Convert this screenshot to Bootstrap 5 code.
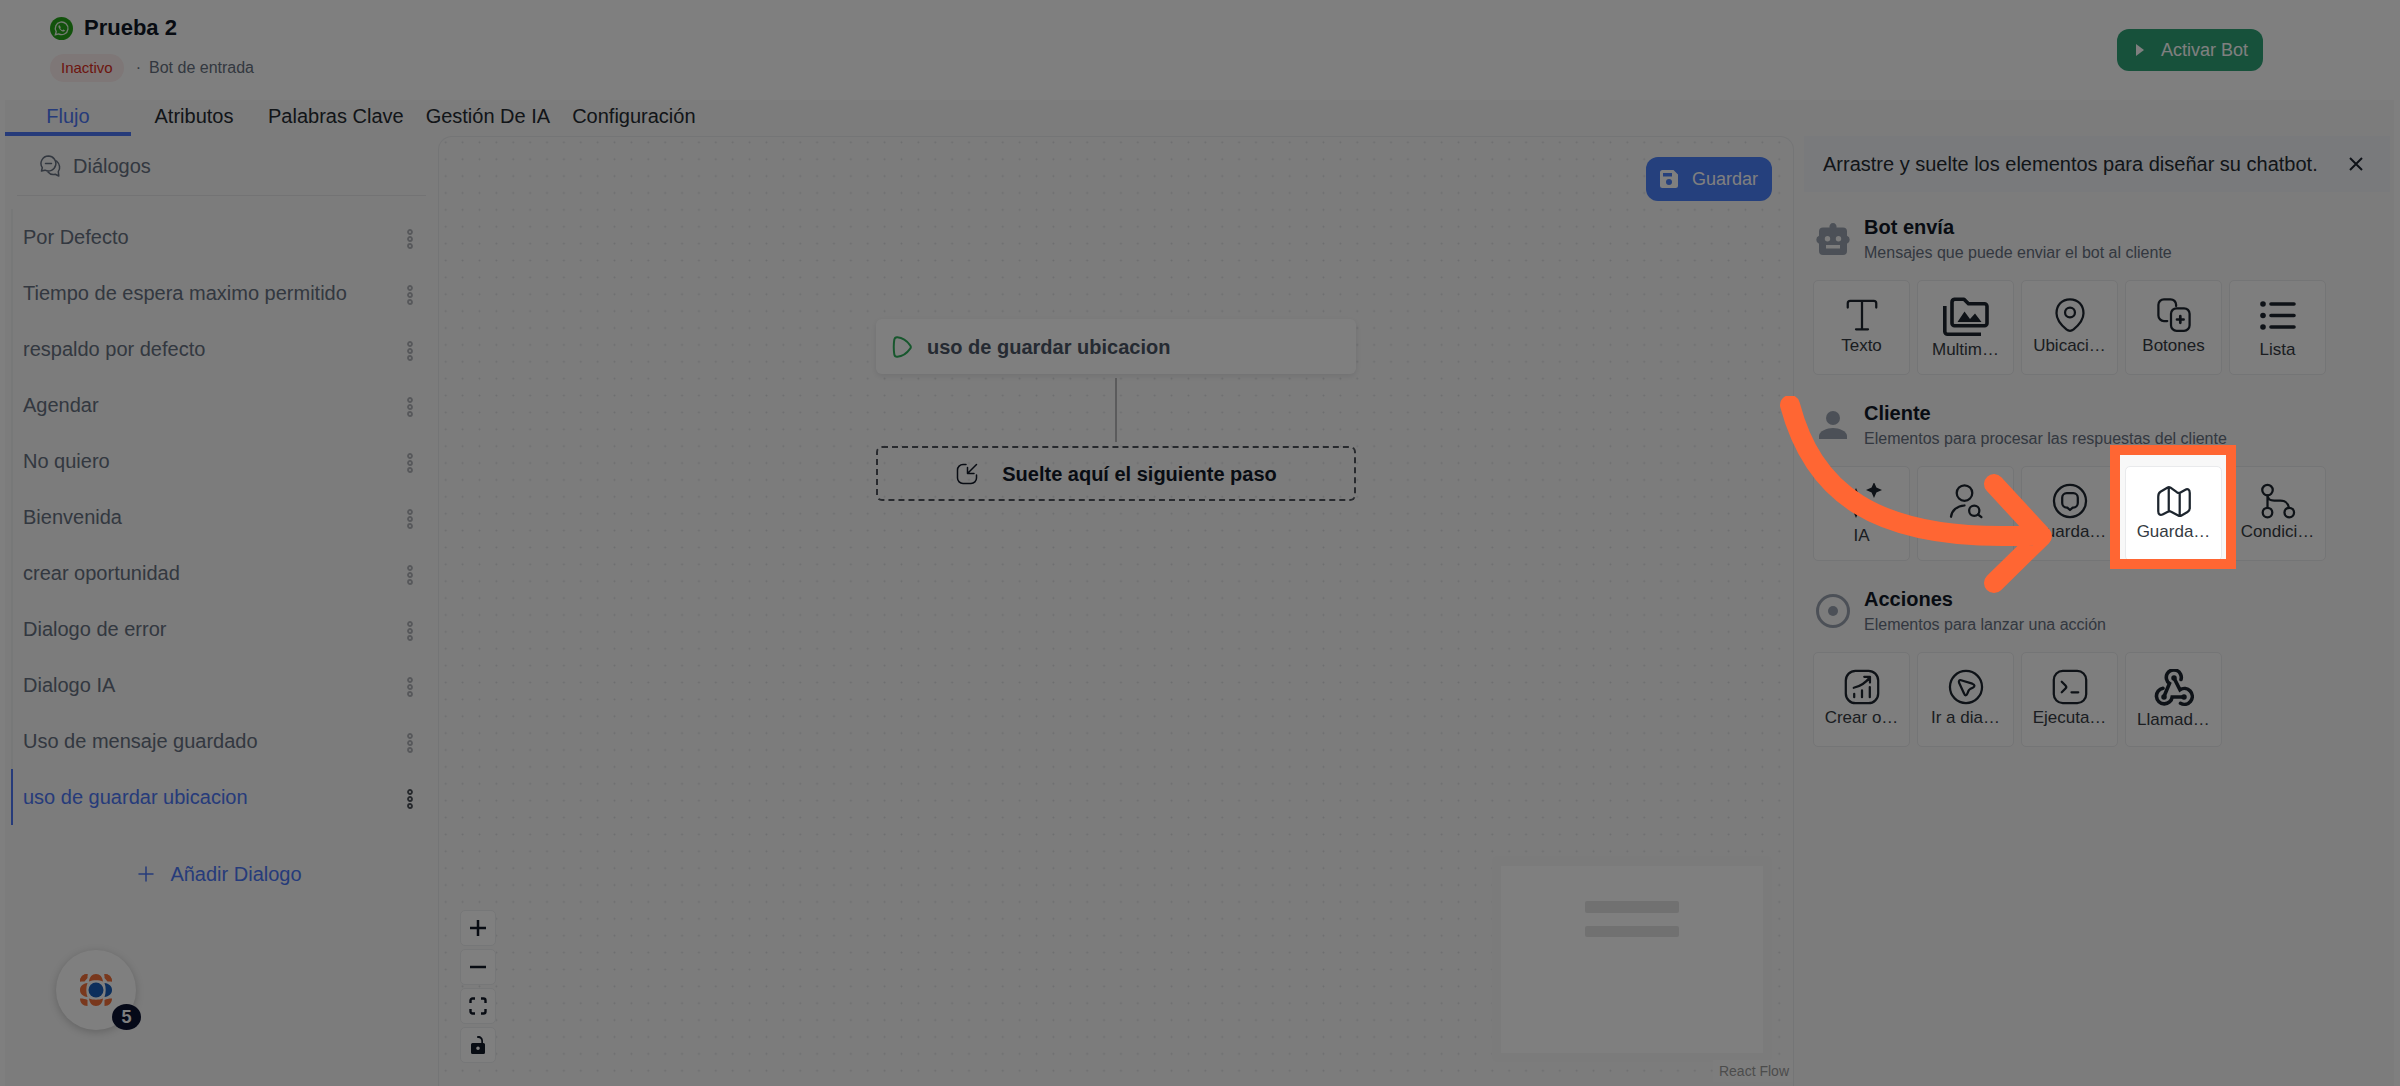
<!DOCTYPE html>
<html lang="es">
<head>
<meta charset="utf-8">
<meta name="viewport" content="width=device-width, initial-scale=1">
<title>Prueba 2 - Bot de entrada</title>
<link href="https://cdn.jsdelivr.net/npm/bootstrap@5.3.0/dist/css/bootstrap.min.css" rel="stylesheet">
<style>
  :root { --ink: #242a31; --muted: #667080; --brand: #4c76f5; --line: #e9eaec; --accent: #ff6633; }
  body { font-family: "Liberation Sans", Arial, sans-serif; font-size: 20px; line-height: 28px; color: var(--ink); background: #fff; overflow: hidden; }
  svg { display: block; flex: none; }
  .stroke-icon { fill: none; stroke: currentColor; stroke-width: 1.5; stroke-linecap: round; stroke-linejoin: round; }
  .page { position: relative; overflow: hidden; }
  .topbar { height: 100px; padding: 13px 137px 0 50px; }
  .title-row { gap: 11px; }
  .meta-row { margin-top: 11px; }
  .bot-name { font-size: 22px; line-height: 30px; color: #111827; }
  .pill-state { font-size: 15px; line-height: 28px; padding: 0 11px; border-radius: 14px; background: #fdeeee; color: #d92d20; }
  .meta-text { font-size: 16px; line-height: 28px; color: var(--muted); }
  .btn-app { --bs-btn-color: #fff; --bs-btn-hover-color: #fff; font-size: 18px; line-height: 26px; height: 44px; border-radius: 12px; border: 0; padding: 0 14px; display: flex; align-items: center; gap: 14px; }
  .btn-go { background: #2ea377; height: 42px; padding: 0 15px 0 14px; gap: 14px; --bs-btn-hover-bg: #27906a; }
  .btn-keep { background: #4a80fa; --bs-btn-hover-bg: #3a70ea; top: 20px; right: 21px; }
  .workspace { margin: 0 6px 0 5px; background: #f8f8f8; }
  .tabs-row .nav-link { min-width: 126px; padding: 0 11px; line-height: 32px; text-align: center; color: var(--ink); border-bottom: 4px solid transparent; }
  .tabs-row .nav-link.active { color: var(--brand); border-color: var(--brand); }
  .sidebar { width: 433px; }
  .side-head { height: 60px; margin: 0 12px; padding-left: 22px; gap: 12px; color: var(--muted); border-bottom: 1px solid #e6e7e9; }
  .dialog-list { margin: 13px 12px 0 6px; }
  .dialog-list li { height: 56px; padding: 0 13px 0 10px; border-left: 2px solid #eff0f1; }
  .dialog-list a { color: var(--muted); text-decoration: none; }
  .dialog-list li.current { border-color: var(--brand); }
  .dialog-list li.current a, .add-link { color: var(--brand); text-decoration: none; }
  .dots-btn { border: 0; background: none; padding: 4px 0 0; color: #aeb1b6; }
  .current .dots-btn { color: #4b5058; }
  .add-link { margin-top: 35px; margin-left: -4px; gap: 15px; }
  .chat-bubble { left: 56px; bottom: 56px; width: 80px; height: 80px; border-radius: 50%; background: #fff; border: 0; box-shadow: 0 2px 8px rgba(0,0,0,.2); }
  .chat-count { right: -5px; bottom: 0; width: 29px; height: 26px; border-radius: 50%; background: #0b1230; color: #fff; font: 700 17px/26px Inter, sans-serif; }
  .board { border: 1px solid var(--line); border-bottom: 0; border-radius: 14px 14px 0 0; background: #f9f9f9; overflow: hidden; min-width: 0; }
  .flow { padding-top: 182px; }
  .step { width: 480px; height: 55px; border-radius: 6px; font-weight: 700; }
  .step-start { background: #fff; color: #4a5565; padding: 0 16px; gap: 15px; box-shadow: 0 2px 6px rgba(16,24,40,.1); }
  .step-drop { border: 2px dashed #50555c; color: #111827; gap: 23px; }
  .wire { width: 2px; height: 64px; background: #b6b6b9; margin: 4px 0; }
  .zoomers { left: 21px; bottom: 23px; gap: 3px; }
  .zoomers button { width: 36px; height: 36px; border: 1px solid #eceef0; border-radius: 5px; background: #fff; color: #111827; padding: 0; display: flex; align-items: center; justify-content: center; }
  .minimap { right: 21px; bottom: 24px; width: 280px; height: 206px; background: #fff; border: 9px solid #f7f7f7; border-top-width: 10px; border-radius: 4px; }
  .credit { right: 0; bottom: 4px; font-size: 14px; line-height: 22px; color: #999; background: #fbfbfb; padding: 0 4px 0 6px; }
  .palette { width: 600px; }
  .tip-bar { height: 56px; margin: 0 4px 21px 10px; padding: 0 27px 0 19px; background: #f3f5f9; }
  .tip-bar button { border: 0; background: none; padding: 0; color: #1d2530; }
  .group-box { margin: 0 0 24px 19px; }
  .group-head { gap: 12px; padding-left: 1px; }
  .group-head .head-icon { width: 38px; color: #98a1ae; }
  .group-head h2 { font-size: 20px; line-height: 28px; font-weight: 700; margin: 0; color: #111827; }
  .group-head p { font-size: 16px; line-height: 24px; margin: 0; color: var(--muted); }
  .tiles { gap: 7px; margin-top: 15px; }
  .tile { position: relative; width: 97px; height: 95px; background: #fcfcfc; border: 1px solid var(--line); border-radius: 5px; padding: 16px 0 0; font-size: 17px; line-height: 26px; color: #353b42; display: flex; flex-direction: column; align-items: center; }
  .tile svg { color: #1d252e; }
  .tile.lit { background: #fff; }
  .spot { position: absolute; z-index: 20; inset: -22px -15px -9px -16px; border: 10px solid var(--accent); box-shadow: 0 0 0 3200px rgba(0,0,0,.5); pointer-events: none; }
  .pointer { position: absolute; z-index: 21; left: -347px; top: -71px; pointer-events: none; }
</style>
<script src="https://cdn.jsdelivr.net/npm/bootstrap@5.3.0/dist/js/bootstrap.bundle.min.js"></script>
</head>
<body>
<div class="page d-flex flex-column vh-100">
  <header class="topbar d-flex justify-content-between align-items-start">
    <div>
      <div class="title-row d-flex align-items-center">
        <svg width="23" height="23" viewBox="0 0 24 24"><circle cx="12" cy="12" r="12" fill="#25a518"/><path d="M5.600 18.500l.9-3.300a6.600 6.600 0 1 1 2.500 2.400z" fill="none" stroke="#e8f6e6" stroke-width="1.400"/><path d="M9.600 8.300c-1.600 1.200-.4 3.600 1.300 5.200 1.800 1.700 4 2.300 4.800.6l-1.700-1.100-1 .9c-1-.4-1.900-1.300-2.400-2.400l.8-.8z" fill="#e8f6e6"/></svg>
        <h1 class="bot-name fw-bold m-0">Prueba 2</h1>
      </div>
      <div class="meta-row d-flex align-items-center">
        <span class="pill-state">Inactivo</span>
        <span class="meta-text px-2 ms-1">·</span>
        <span class="meta-text">Bot de entrada</span>
      </div>
    </div>
    <button class="btn btn-app btn-go mt-3" type="button">
      <svg width="16" height="16" viewBox="0 0 16 16"><path d="M5 2l8 6-8 6z" fill="#fff"/></svg>Activar Bot
    </button>
  </header>

  <main class="workspace flex-grow-1 d-flex flex-column">
    <nav class="nav tabs-row">
      <a class="nav-link active" href="#">Flujo</a>
      <a class="nav-link" href="#">Atributos</a>
      <a class="nav-link" href="#">Palabras Clave</a>
      <a class="nav-link" href="#">Gestión De IA</a>
      <a class="nav-link" href="#">Configuración</a>
    </nav>
    <div class="d-flex flex-grow-1">
      <aside class="sidebar flex-shrink-0">
        <div class="side-head d-flex align-items-center">
          <svg class="stroke-icon" width="22" height="24" viewBox="0 0 22 24"><path d="M9.500 2a7.500 7.500 0 1 1-3.500 14.200L2.500 17l.8-3.300A7.500 7.500 0 0 1 9.500 2z"/><path d="M6.500 9.500h6M17.500 7c3.500 3 4 7.500 1.800 10.600l.5 4.400-3.600-1.700c-3 .8-5.500-.3-7.200-2.300"/></svg>
          <span>Diálogos</span>
        </div>
        <ul class="dialog-list list-unstyled mb-0" id="dialogs">
          <li class="d-flex align-items-center justify-content-between"><a href="#">Por Defecto</a></li>
          <li class="d-flex align-items-center justify-content-between"><a href="#">Tiempo de espera maximo permitido</a></li>
          <li class="d-flex align-items-center justify-content-between"><a href="#">respaldo por defecto</a></li>
          <li class="d-flex align-items-center justify-content-between"><a href="#">Agendar</a></li>
          <li class="d-flex align-items-center justify-content-between"><a href="#">No quiero</a></li>
          <li class="d-flex align-items-center justify-content-between"><a href="#">Bienvenida</a></li>
          <li class="d-flex align-items-center justify-content-between"><a href="#">crear oportunidad</a></li>
          <li class="d-flex align-items-center justify-content-between"><a href="#">Dialogo de error</a></li>
          <li class="d-flex align-items-center justify-content-between"><a href="#">Dialogo IA</a></li>
          <li class="d-flex align-items-center justify-content-between"><a href="#">Uso de mensaje guardado</a></li>
          <li class="d-flex align-items-center justify-content-between current"><a href="#">uso de guardar ubicacion</a></li>
        </ul>
        <a class="add-link d-flex justify-content-center align-items-center" href="#">
          <svg class="stroke-icon" width="18" height="18" viewBox="0 0 18 18"><path d="M9 2v14M2 9h14"/></svg>Añadir Dialogo
        </a>
      </aside>

      <section class="board flex-grow-1 position-relative">
        <svg class="position-absolute top-0 start-0 w-100 h-100" aria-hidden="true">
          <defs><pattern id="grid" x="-1.700" y="-3.100" width="16.880" height="16.880" patternUnits="userSpaceOnUse"><circle cx="8.440" cy="8.440" r="1" fill="#dadbde"/></pattern></defs>
          <rect width="100%" height="100%" fill="url(#grid)"/>
        </svg>
        <button class="btn btn-app btn-keep position-absolute" type="button">
          <svg width="18" height="18" viewBox="0 0 18 18"><path fill-rule="evenodd" fill="#fff" d="M2.500 0h11L18 4.500v11a2.500 2.500 0 0 1-2.500 2.500h-13A2.500 2.500 0 0 1 0 15.500v-13A2.500 2.500 0 0 1 2.500 0zM3 3v3.500h9V3zm6 6a3 3 0 1 0 0 6 3 3 0 0 0 0-6z"/></svg>Guardar
        </button>
        <div class="flow position-relative d-flex flex-column align-items-center">
          <div class="step step-start d-flex align-items-center">
            <svg width="20" height="24" viewBox="0 0 20 24" fill="none" stroke="#2fae5b" stroke-width="2" stroke-linejoin="round"><path d="M5.300 2.200C9.500 2.500 15 5.800 18.200 10.300c.9 1.200.9 2.200 0 3.400C15 18.200 9.500 21.500 5.300 21.800c-1.700.1-2.700-.8-3-2.500-.7-4.600-.7-10 0-14.600.3-1.700 1.300-2.600 3-2.500z"/></svg>
            <span>uso de guardar ubicacion</span>
          </div>
          <div class="wire"></div>
          <div class="step step-drop d-flex align-items-center justify-content-center">
            <svg class="stroke-icon" width="24" height="24" viewBox="0 0 24 24"><path d="M11 2.500H8A5.500 5.500 0 0 0 2.500 8v8A5.500 5.500 0 0 0 8 21.500h8a5.500 5.500 0 0 0 5.500-5.500v-3"/><path d="M21.500 2.500l-9 9M12.500 5.500v6h6.500"/></svg>
            <span>Suelte aquí el siguiente paso</span>
          </div>
        </div>
        <div class="zoomers position-absolute d-flex flex-column">
          <button type="button" aria-label="Acercar"><svg width="18" height="18" viewBox="0 0 18 18"><path d="M9 1v16M1 9h16" stroke="currentColor" stroke-width="2.500"/></svg></button>
          <button type="button" aria-label="Alejar"><svg width="18" height="18" viewBox="0 0 18 18"><path d="M1 9h16" stroke="currentColor" stroke-width="2.500"/></svg></button>
          <button type="button" aria-label="Ajustar vista"><svg width="18" height="18" viewBox="0 0 18 18"><path d="M1.500 6V3.500a2 2 0 0 1 2-2H6M12 1.500h2.500a2 2 0 0 1 2 2V6M16.500 12v2.500a2 2 0 0 1-2 2H12M6 16.500H3.500a2 2 0 0 1-2-2V12" fill="none" stroke="currentColor" stroke-width="2.400"/></svg></button>
          <button type="button" aria-label="Bloquear"><svg width="14" height="18" viewBox="0 0 14 18"><path fill="currentColor" fill-rule="evenodd" d="M1.500 7h8.800V5C10.300 3 9 2 7.300 2 6.500 2 6 1.600 6 1s.5-1 1.300-1C10 0 12 2 12 5v2h.5A1.500 1.500 0 0 1 14 8.500v8a1.500 1.500 0 0 1-1.500 1.500h-11A1.500 1.500 0 0 1 0 16.500v-8A1.500 1.500 0 0 1 1.500 7zM7 10.500a1.800 1.800 0 1 0 0 3.600 1.800 1.800 0 0 0 0-3.600z"/></svg></button>
        </div>
        <div class="minimap position-absolute">
          <svg width="262" height="187"><rect x="84" y="35" width="94" height="12" rx="2" fill="#e2e2e2"/><rect x="84" y="60" width="94" height="11" rx="2" fill="#e2e2e2"/></svg>
        </div>
        <a class="credit position-absolute text-decoration-none" href="#">React Flow</a>
      </section>

      <aside class="palette flex-shrink-0">
        <div class="tip-bar d-flex align-items-center justify-content-between">
          <span>Arrastre y suelte los elementos para diseñar su chatbot.</span>
          <button type="button" aria-label="Cerrar"><svg width="14" height="14" viewBox="0 0 14 14"><path d="M1 1l12 12M13 1L1 13" stroke="currentColor" stroke-width="2"/></svg></button>
        </div>

        <div class="group-box">
          <div class="group-head d-flex align-items-center">
            <div class="head-icon"><svg width="38" height="34" viewBox="0 0 38 34"><path fill="currentColor" fill-rule="evenodd" d="M14 5.500h1.500a3.600 3.600 0 1 1 7 0H29a4 4 0 0 1 4 4v4.200a4.300 4.300 0 0 1 0 8V29a4 4 0 0 1-4 4H9a4 4 0 0 1-4-4v-7.300a4.300 4.300 0 0 1 0-8V9.500a4 4 0 0 1 4-4zM13.500 14a2.700 2.700 0 1 0 0 5.400 2.700 2.700 0 0 0 0-5.400zm11 0a2.700 2.700 0 1 0 0 5.400 2.700 2.700 0 0 0 0-5.400zM12 23v3.500h14V23z"/></svg></div>
            <div><h2>Bot envía</h2><p>Mensajes que puede enviar el bot al cliente</p></div>
          </div>
          <div class="tiles d-flex">
            <button class="tile" type="button"><svg class="stroke-icon" width="36" height="36" viewBox="0 0 24 24"><path d="M2.500 7V4.200C2.500 3 3.200 2.500 4.200 2.500h15.600c1 0 1.700.5 1.700 1.700V7M12 2.500v19M8 21.500h8"/></svg>Texto</button>
            <button class="tile" type="button"><svg width="46" height="40" viewBox="0 0 46 40"><g fill="none" stroke="currentColor" stroke-width="3.600"><path d="M1.800 9v25.500a2.700 2.700 0 0 0 2.700 2.700H38"/><path d="M11.500 2.300H21l4.500 4.500h16a2.500 2.500 0 0 1 2.500 2.500v17a2.500 2.500 0 0 1-2.500 2.500h-30A2.500 2.500 0 0 1 9 26.300v-21a3 3 0 0 1 2.500-3z" stroke-linejoin="round"/></g><path fill="currentColor" d="M14.500 25l7-10.500 5.500 7.500 5-5.500 6.500 8.500z"/></svg>Multim…</button>
            <button class="tile" type="button"><svg class="stroke-icon" width="36" height="36" viewBox="0 0 24 24"><path d="M12 1.500c5.500 0 9 4.200 9 9.300 0 4.700-3.500 8.200-6.600 10.800-1.500 1.200-3.300 1.200-4.800 0C6.500 19 3 15.500 3 10.800c0-5.100 3.500-9.300 9-9.300z"/><circle cx="12" cy="10.300" r="3.300"/></svg>Ubicaci…</button>
            <button class="tile" type="button"><svg class="stroke-icon" width="36" height="36" viewBox="0 0 24 24"><path d="M7.500 16H5.300A3.700 3.700 0 0 1 1.600 12.300V5.200a3.700 3.700 0 0 1 3.700-3.700h4.400a3.700 3.700 0 0 1 3.700 3.700V6"/><rect x="10" y="7.500" width="12.400" height="15" rx="3.700"/><path d="M16.200 12.800v4.400M14 15h4.400" stroke-width="1.800"/></svg>Botones</button>
            <button class="tile" type="button"><svg width="36" height="40" viewBox="0 0 36 40"><g fill="currentColor"><circle cx="3" cy="7" r="2.800"/><circle cx="3" cy="18.500" r="2.800"/><circle cx="3" cy="30" r="2.800"/></g><path d="M11 7h23M11 18.500h23M11 30h23" stroke="currentColor" stroke-width="3.600" stroke-linecap="round"/></svg>Lista</button>
          </div>
        </div>

        <div class="group-box">
          <div class="group-head d-flex align-items-center">
            <div class="head-icon d-flex justify-content-center"><svg width="28" height="28" viewBox="0 0 28 28" fill="currentColor"><circle cx="14" cy="7" r="7"/><path d="M0 28v-3c0-5 8-8 14-8s14 3 14 8v3z"/></svg></div>
            <div><h2>Cliente</h2><p>Elementos para procesar las respuestas del cliente</p></div>
          </div>
          <div class="tiles d-flex">
            <button class="tile" type="button"><svg width="44" height="40" viewBox="0 0 44 40" fill="currentColor"><path d="M34-1l2.400 5.600L42 7l-5.600 2.400L34 15l-2.400-5.600L26 7l5.600-2.400zM34 25l2.400 4.600L41 32l-4.600 2.400L34 39l-2.400-4.600L27 32l4.600-2.400zM16 5l4.500 10.500L31 20l-10.500 4.500L16 35l-4.500-10.500L1 20l10.500-4.500z"/></svg>IA</button>
            <button class="tile" type="button" aria-label="Buscar contacto"><svg class="stroke-icon" width="36" height="36" viewBox="0 0 24 24"><circle cx="11" cy="6.700" r="5.200"/><path d="M2 22.500c.5-4.200 4-7.300 9-7.500"/><circle cx="17.500" cy="18.500" r="3.400"/><path d="M20 21l2.300 1.700"/></svg></button>
            <button class="tile" type="button"><svg class="stroke-icon" width="36" height="36" viewBox="0 0 24 24"><circle cx="12" cy="12" r="10.700"/><path d="M9.800 6.800h4.400a3 3 0 0 1 3 3v3.600a3 3 0 0 1-3 3h-.4L12 18l-1.800-1.600h-.4a3 3 0 0 1-3-3V9.800a3 3 0 0 1 3-3z"/></svg>Guarda…</button>
            <button class="tile lit" type="button"><svg class="stroke-icon" width="36" height="36" viewBox="0 0 24 24"><path d="M1.500 9.200v9.600c0 2.300 1.300 3 3.200 2l3.200-1.700c.7-.4 1.500-.4 2.200 0l4.700 2.500c.7.400 1.500.4 2.200 0l4-2.300c1-.6 1.500-1.300 1.500-2.500V6.600c0-2.300-1.300-3-3.200-2l-3 1.700c-.7.4-1.500.4-2.200 0L9.700 3.100c-.7-.4-1.500-.4-2.200 0L3 5.800C2 6.400 1.500 8 1.500 9.200zM8.500 3v16M15.800 7v14.500"/></svg>Guarda…
              <span class="spot"></span>
              <svg class="pointer" width="280" height="200" viewBox="1779 396 280 200" fill="none" stroke="#ff6633" stroke-width="20" stroke-linecap="round" stroke-linejoin="round"><path d="M1790 405C1812 487 1868 545 2038 535M1994 484L2042 536 1994 583"/></svg>
            </button>
            <button class="tile" type="button"><svg class="stroke-icon" width="36" height="36" viewBox="0 0 24 24"><circle cx="5" cy="4.700" r="3.500"/><circle cx="5" cy="19.700" r="3.200"/><circle cx="19.500" cy="19.700" r="3.200"/><path d="M5 8.200v8.300M5 8.200c.3 3 2 3.500 4.500 3.500h4c3.500 0 5 1.300 5.800 4.800"/></svg>Condici…</button>
          </div>
        </div>

        <div class="group-box">
          <div class="group-head d-flex align-items-center">
            <div class="head-icon d-flex justify-content-center"><svg width="34" height="34" viewBox="0 0 34 34"><circle cx="17" cy="17" r="15.500" fill="none" stroke="currentColor" stroke-width="3"/><circle cx="17" cy="17" r="5" fill="currentColor"/></svg></div>
            <div><h2>Acciones</h2><p>Elementos para lanzar una acción</p></div>
          </div>
          <div class="tiles d-flex">
            <button class="tile" type="button"><svg class="stroke-icon" width="36" height="36" viewBox="0 0 24 24"><rect x="1.200" y="1.200" width="21.600" height="21.600" rx="6.500"/><path d="M6.800 18.800v-2.300M12 18.800v-4.500M17.200 18.800v-6.800M6.500 12.500c4.500-1 7.800-3.200 10.500-6.700M13.500 5.200h3.800V9"/></svg>Crear o…</button>
            <button class="tile" type="button"><svg class="stroke-icon" width="36" height="36" viewBox="0 0 24 24"><circle cx="12" cy="12" r="10.700"/><path d="M8.700 7.500l7.500 2.300c1.800.6 1.900 1.900.3 2.700l-1.800.9c-.5.300-.8.600-1 1.100l-.8 1.900c-.6 1.500-1.700 1.500-2.200-.1L7.400 9.200C7 7.900 7.500 7.200 8.700 7.500z"/></svg>Ir a dia…</button>
            <button class="tile" type="button"><svg class="stroke-icon" width="36" height="36" viewBox="0 0 24 24"><rect x="1.200" y="1.200" width="21.600" height="21.600" rx="6"/><path d="M6.500 8.500L9 11c.7.700.7 1.300 0 2l-2.500 2.500M13 15.500h4.500"/></svg>Ejecuta…</button>
            <button class="tile" type="button"><svg width="40" height="38" viewBox="0 1 40 38" fill="none" stroke="currentColor" stroke-width="3.600" stroke-linecap="round"><path d="M27 11.500a7.500 7.500 0 1 0-11.500 4L10 28.500M9 20.200a7.900 7.900 0 1 0 9.200 8.800H30M20 10l6 11.800a7.900 7.900 0 1 1 .5 13.500"/><g fill="currentColor" stroke-width="1.500"><circle cx="20" cy="10" r="2"/><circle cx="10" cy="29" r="2"/><circle cx="30" cy="29" r="2"/></g></svg>Llamad…</button>
          </div>
        </div>
      </aside>
    </div>
  </main>
  <button class="chat-bubble position-absolute d-flex align-items-center justify-content-center" type="button" aria-label="Ayuda">
    <svg width="32" height="32" viewBox="0 0 32 32"><g fill="#f2703a"><path d="M0 7.500C0 3 3 0 7.500 0c0 3-2.500 6.500-7.500 7.500zM32 7.500C32 3 29 0 24.500 0c0 3 2.500 6.500 7.500 7.500zM0 24.500C0 29 3 32 7.500 32V26c-2-1-4-1.500-7.500-1.500zM32 24.500c0 4.500-3 7.500-7.500 7.500v-6c2-1 4-1.500 7.500-1.500z"/><path d="M0 7.500h4.500L7.500 4V0C3 0 0 3 0 7.500zM32 7.500h-4.500L24.500 4V0C29 0 32 3 32 7.500zM9 7.500C9.500 3 12 0 16 0s6.500 3 7 7.500c-4-1.600-10-1.600-14 0zM9 24.500c.5 4.500 3 7.500 7 7.500s6.500-3 7-7.500c-4 1.600-10 1.600-14 0zM7.500 9C3 9.500 0 12 0 16s3 6.500 7.500 7c-1.600-4-1.600-10 0-14z"/></g><path fill="#1a5fb8" d="M24.500 9c4.500.5 7.500 3 7.500 7s-3 6.500-7.500 7c1.600-4 1.600-10 0-14z"/><circle cx="16" cy="16" r="7.500" fill="#1a5fb8"/></svg>
    <span class="chat-count position-absolute">5</span>
  </button>
</div>
<script>
  // every dialog row gets its own options button
  document.querySelectorAll('#dialogs li').forEach(function (row) {
    row.insertAdjacentHTML('beforeend', '<button class="dots-btn" type="button" aria-label="Opciones"><svg width="6" height="20" viewBox="0 0 6 20" fill="none" stroke="currentColor" stroke-width="1.800"><circle cx="3" cy="3" r="2"/><circle cx="3" cy="10" r="2"/><circle cx="3" cy="17" r="2"/></svg></button>');
  });
</script>
</body>
</html>
